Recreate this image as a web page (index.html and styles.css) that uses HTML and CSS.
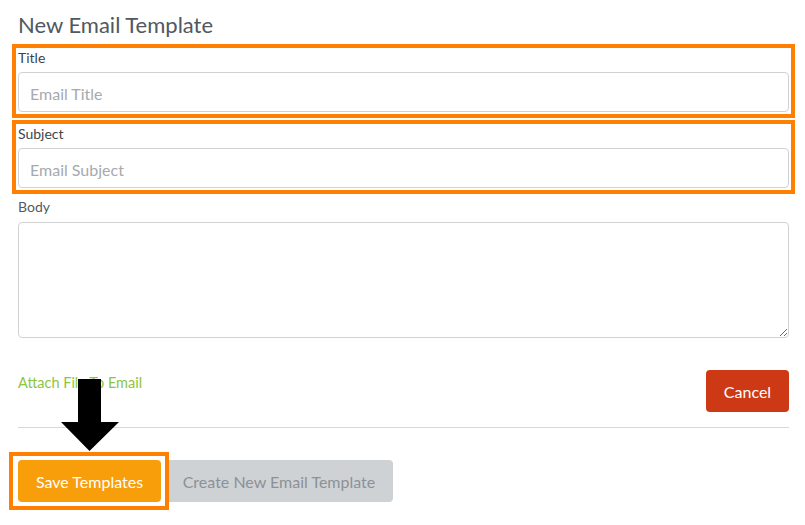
FILE: index.html
```html
<!DOCTYPE html>
<html>
<head>
<meta charset="utf-8">
<link rel="stylesheet" href="styles.css">
</head>
<body>
<div class="page">
  <h1 class="heading">New Email Template</h1>
  <div class="field hl">
    <label class="label">Title</label>
    <input class="input" type="text" placeholder="Email Title">
  </div>
  <div class="field hl">
    <label class="label">Subject</label>
    <input class="input" type="text" placeholder="Email Subject">
  </div>
  <div class="field field-body">
    <label class="label label-body">Body</label>
    <textarea class="textarea"></textarea>
  </div>
  <div class="row">
    <a class="attach" href="#">Attach File To Email</a>
    <button class="btn btn-cancel">Cancel</button>
  </div>
  <hr class="divider">
  <div class="actions">
    <button class="btn btn-save hl-save">Save Templates</button>
    <button class="btn btn-create">Create New Email Template</button>
  </div>
  <svg class="arrow" width="60" height="74" viewBox="0 0 60 74">
    <polygon points="18,0 41,0 41,43 59,43 29.5,72 1,43 18,43" fill="#000"/>
  </svg>
</div>
</body>
</html>
```

FILE: styles.css
```css
* { box-sizing: border-box; }
html, body { margin: 0; padding: 0; background: #fff; }
body { font-family: Lato, "Noto Sans", sans-serif; }
.page {
  position: relative;
  width: 805px;
  height: 525px;
  padding: 12px 16px 0 18px;
}
.heading {
  margin: 0 0 10px 0;
  font-size: 22px;
  line-height: 26px;
  font-weight: 400;
  color: #505860;
}
.field {
  position: relative;
  display: flex;
  flex-direction: column;
}
.field + .field { margin-top: 12px; }
.field-body { margin-top: 9px !important; }
.label {
  display: block;
  font-size: 14px;
  line-height: 20px;
  color: #3c454c;
  margin-bottom: 4px;
}
.label-body { color: #535b62; margin-bottom: 5px; }
.input {
  display: block;
  width: 100%;
  height: 40px;
  border: 1px solid #d2d2d2;
  border-radius: 4px;
  padding: 2px 10px 0 11px;
  font-family: Lato, "Noto Sans", sans-serif;
  font-size: 16px;
  color: #333;
  background: #fff;
  outline: none;
}
.input::placeholder { color: #a6aaae; }
.textarea {
  display: block;
  width: 100%;
  height: 116px;
  border: 1px solid #d2d2d2;
  border-radius: 4px;
  font-family: Lato, "Noto Sans", sans-serif;
  background: #fff;
  outline: none;
  margin: 0;
}
.hl::after {
  content: "";
  position: absolute;
  top: -4px; left: -6px; right: -6px; bottom: -6px;
  border: 4px solid #ff8000;
  pointer-events: none;
}
.row {
  display: flex;
  justify-content: space-between;
  align-items: flex-start;
  margin-top: 32px;
}
.attach {
  font-size: 14.5px;
  line-height: 20px;
  margin-top: 3px;
  color: #8cc540;
  text-decoration: none;
}
.btn {
  height: 42px;
  border: none;
  border-radius: 4px;
  padding: 0 18px;
  font-family: Lato, "Noto Sans", sans-serif;
  font-size: 16px;
  cursor: pointer;
}
.btn-cancel {
  background: #cd3815;
  color: #fff;
  width: 83px;
  padding: 0;
}
.divider {
  margin: 15px 0 0 0;
  border: none;
  border-top: 1px solid #d8d8d8;
  height: 0;
}
.actions {
  display: flex;
  gap: 4px;
  margin-top: 32px;
}
.btn-save {
  position: relative;
  background: #f99e0b;
  color: #fff;
  width: 143px;
  padding: 0;
}
.hl-save::after {
  content: "";
  position: absolute;
  top: -8px; left: -9px; right: -8px; bottom: -8px;
  border: 4px solid #ff8000;
  pointer-events: none;
}
.btn-create {
  background: #cfd2d5;
  color: #8b9197;
  width: 228px;
  padding: 0;
}
.arrow {
  position: absolute;
  left: 60px;
  top: 379px;
}
```
